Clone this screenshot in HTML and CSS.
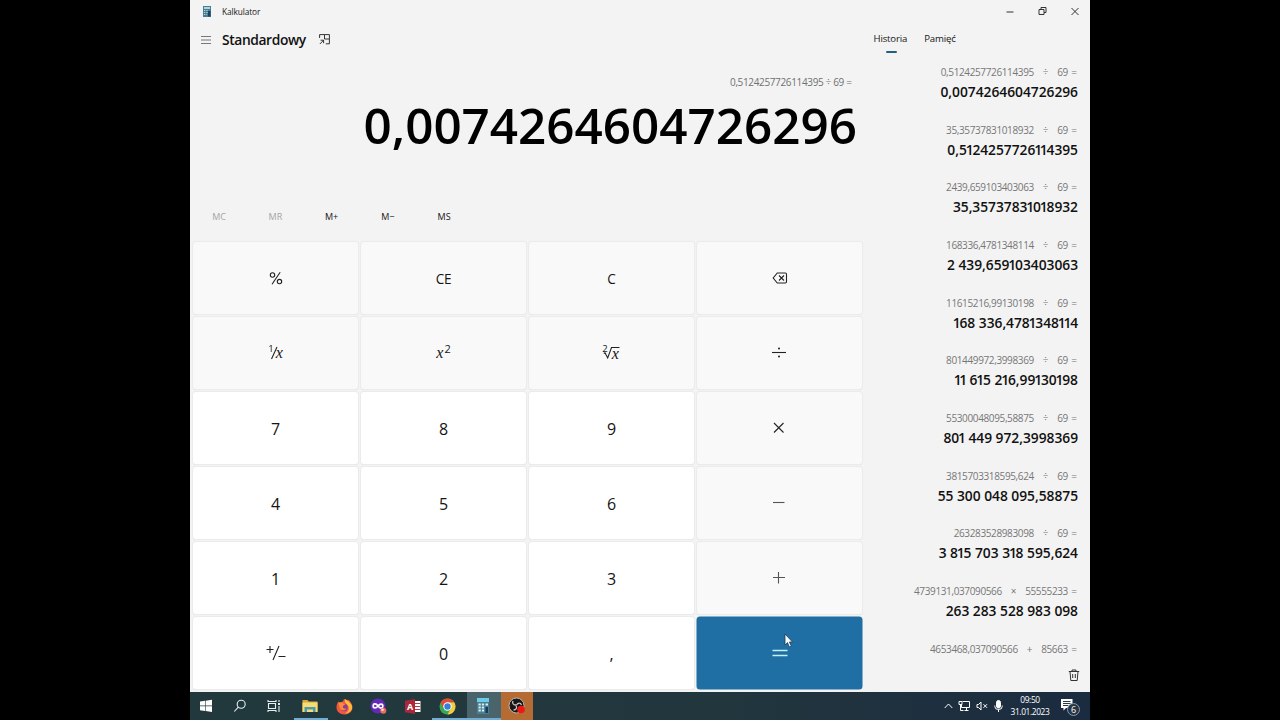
FILE: index.html
```html
<!DOCTYPE html>
<html lang="pl">
<head>
<meta charset="utf-8">
<title>Kalkulator</title>
<link rel="stylesheet" href="styles.css">
</head>
<body>
<div class="screen">
  <div class="window">
    <header class="titlebar">
      <svg class="app-icon" width="8" height="11" viewBox="0 0 8 11"><rect width="8" height="11" fill="#4b7c91"/><rect x="1" y="1" width="6" height="2" fill="#a9d7de"/><path d="M1 4.5h4M1 6.5h4M1 8.5h3" stroke="#b9d5dd" stroke-dasharray="1 .7"/><rect x="5" y="5" width="2.5" height="5.5" fill="#1d4265"/></svg>
      <span class="app-name">Kalkulator</span>
      <div class="win-buttons">
        <svg width="10" height="10" viewBox="0 0 10 10"><path d="M1.5 6h7"/></svg>
        <svg width="10" height="10" viewBox="0 0 10 10"><path d="M1 3.500h5v5H1zM3 3.500v-2h5v5H6"/></svg>
        <svg width="10" height="10" viewBox="0 0 10 10"><path d="M1.5 2l7 7M8.500 2l-7 7"/></svg>
      </div>
    </header>
    <main class="body">
      <section class="calc">
        <div class="mode">
          <svg class="menu" width="12" height="10" viewBox="0 0 12 10"><path d="M1 1.500h10M1 5h10M1 8.500h10"/></svg>
          <h1>Standardowy</h1>
          <svg class="pin" width="11" height="11" viewBox="0 0 11 11"><path d="M.6 4V.6h9.800v9.200H6.800M5.500 1v4H10M.8 10l4-4M1.600 6.200h3v3"/></svg>
        </div>
        <div class="expression">0,5124257726114395 ÷ 69 =</div>
        <div class="result">0,0074264604726296</div>
        <div class="memory"><span class="off">MC</span><span class="off">MR</span><span>M+</span><span>M−</span><span>MS</span></div>
        <div class="keys">
          <div class="key"><svg width="14" height="14" viewBox="0 0 14 14"><circle cx="3.500" cy="4" r="2.200"/><circle cx="10.500" cy="10.600" r="2.200"/><path d="M11.200 1.300L3 13.300"/></svg></div>
          <div class="key fn">CE</div>
          <div class="key fn">C</div>
          <div class="key"><svg width="16" height="12" viewBox="0 0 16 12"><path d="M5.300 1h8q1.200 0 1.200 1.200v7.600q0 1.200-1.200 1.200h-8L1.200 6zM7 3.500l5 5M12 3.500l-5 5"/></svg></div>
          <div class="key"><span class="math"><span class="up">1</span><svg class="slash" width="8" height="14" viewBox="0 0 8 14"><path d="M7 1L1.500 13"/></svg><i>x</i></span></div>
          <div class="key"><span class="math"><i>x</i><span class="up sq">2</span></span></div>
          <div class="key"><span class="math rooted"><span class="up root">2</span><svg class="radical" width="17" height="14" viewBox="0 0 17 14"><path d="M.8 7.500l1.200-.7 2.700 5.200L8.500 1.500H16.500"/></svg><i class="under">x</i></span></div>
          <div class="key op"><svg width="16" height="12" viewBox="0 0 16 12"><path d="M1 5.500h14"/><circle class="dot" cx="8" cy="1.500" r="1"/><circle class="dot" cx="8" cy="9.500" r="1"/></svg></div>
          <div class="key num">7</div><div class="key num">8</div><div class="key num">9</div>
          <div class="key op"><svg width="12" height="12" viewBox="0 0 12 12"><path d="M1 1l9.500 9.500M10.500 1L1 10.500"/></svg></div>
          <div class="key num">4</div><div class="key num">5</div><div class="key num">6</div>
          <div class="key op"><svg width="14" height="12" viewBox="0 0 14 12"><path class="soft" d="M1 5.500h11.500"/></svg></div>
          <div class="key num">1</div><div class="key num">2</div><div class="key num">3</div>
          <div class="key op"><svg width="14" height="13" viewBox="0 0 14 13"><path class="soft" d="M1 6.500h12M6.500 1v11.500"/></svg></div>
          <div class="key sign"><svg width="20" height="16" viewBox="0 0 20 16"><path d="M.5 4.500h7M4 1v7M13 1L7 15M12.500 11.500h7"/></svg></div>
          <div class="key num">0</div><div class="key num">,</div>
          <div class="key equals"><svg width="16" height="10" viewBox="0 0 16 10"><path d="M.5 2.500h15M.5 7.500h15"/></svg>
            <svg class="cursor" width="9" height="15" viewBox="0 0 9 15"><path d="M1 1v11l2.500-2.400L5.300 14l2-1-1.900-4H8.500z"/></svg></div>
        </div>
      </section>
      <aside class="side">
        <nav class="tabs"><span class="tab active">Historia</span><span class="tab">Pamięć</span></nav>
        <div class="history">
          <div class="entry"><div class="line"><span>0,5124257726114395</span><span>÷</span><span>69 =</span></div><b>0,0074264604726296</b></div>
          <div class="entry"><div class="line"><span>35,35737831018932</span><span>÷</span><span>69 =</span></div><b>0,5<i>1</i>24257726<i>1</i><i>1</i>4395</b></div>
          <div class="entry"><div class="line"><span>2439,659103403063</span><span>÷</span><span>69 =</span></div><b>35,3573783<i>1</i>0<i>1</i>8932</b></div>
          <div class="entry"><div class="line"><span>168336,4781348114</span><span>÷</span><span>69 =</span></div><b>2 439,659<i>1</i>03403063</b></div>
          <div class="entry"><div class="line"><span>11615216,99130198</span><span>÷</span><span>69 =</span></div><b><i>1</i>68 336,478<i>1</i>348<i>1</i><i>1</i>4</b></div>
          <div class="entry"><div class="line"><span>801449972,3998369</span><span>÷</span><span>69 =</span></div><b><i>1</i><i>1</i> 6<i>1</i>5 2<i>1</i>6,99<i>1</i>30<i>1</i>98</b></div>
          <div class="entry"><div class="line"><span>55300048095,58875</span><span>÷</span><span>69 =</span></div><b>80<i>1</i> 449 972,3998369</b></div>
          <div class="entry"><div class="line"><span>3815703318595,624</span><span>÷</span><span>69 =</span></div><b>55 300 048 095,58875</b></div>
          <div class="entry"><div class="line"><span>263283528983098</span><span>÷</span><span>69 =</span></div><b>3 8<i>1</i>5 703 3<i>1</i>8 595,624</b></div>
          <div class="entry"><div class="line"><span>4739131,037090566</span><span>×</span><span>55555233 =</span></div><b>263 283 528 983 098</b></div>
          <div class="entry last"><div class="line"><span>4653468,037090566</span><span>+</span><span>85663 =</span></div></div>
        </div>
        <svg class="trash" width="12" height="13" viewBox="0 0 12 13"><path d="M.8 2.500h10.400M4 2.500V1h4v1.500M2 2.500l.8 9h6.400l.8-9M4.700 5v4M7.300 5v4"/></svg>
      </aside>
    </main>
    <footer class="taskbar">
      <div class="task"><svg width="14" height="14" viewBox="0 0 14 14"><path fill="#fff" d="M1 2.500l5-.7v4.800H1zM6.600 1.700L13 .8v5.800H6.600zM1 7.200h5V12l-5-.7zM6.600 7.200H13V13l-6.400-.9z"/></svg></div>
      <div class="task"><svg class="outline" width="14" height="14" viewBox="0 0 14 14"><circle cx="8.200" cy="5.200" r="4"/><path d="M5.300 8.200L1.300 12.500"/></svg></div>
      <div class="task view"><svg class="outline" width="14" height="14" viewBox="0 0 14 14"><path d="M1 1v1.500h8V1M1.500 4.500h7v5h-7zM1 13v-1.500h8V13M12 1v2M12 7v6"/><path d="M12 4v2" stroke-width="2"/></svg></div>
      <div class="task open"><svg width="16" height="14" viewBox="0 0 16 14"><path fill="#dba935" d="M.5 1h5l1.300 1.500h8.700V13H.5z"/><path fill="#f6dc74" d="M.5 3.500h15V13H.5z"/><path fill="#4f9aab" d="M2.500 8h11v5h-2.500v-2.500H5V13H2.500z"/></svg></div>
      <div class="task"><svg width="17" height="17" viewBox="0 0 17 17"><path fill="#f6563d" d="M2.500 3.500l1.700 1.300C6 4 7 4 8 1c1 .3 2 1.500 2.700 2L12 1.500c2.500 2 4.500 4.500 4.500 8 0 4-3.500 7-8 7s-8-3-8-7c0-2.500.7-4.500 2-6z"/><path fill="#ffbd39" d="M9 1c4 3 7.500 5 7 9-.5 3.500-4 5.500-7 5.500 4-2 4.500-5 3-8C11 6 8 5 9 1z"/><circle cx="8" cy="9.500" r="3.700" fill="#8b3d9d"/><path fill="#fb8936" d="M2.500 5c2-1.200 4-.7 5 .5l2 .5-2.500 2c-.7 2 1 3 3.500 2.500-1.500 2.500-5 2.500-6.500 0C3.300 8.700 3 7 2.500 5z"/></svg></div>
      <div class="task"><svg width="17" height="17" viewBox="0 0 17 17"><circle cx="8" cy="8" r="7.500" fill="#6429b8"/><path d="M8 8C6 5 3.200 5.500 3.200 8s2.800 2.500 4.800 0 4.800-2.500 4.800 0S10 11 8 8z" fill="none" stroke="#fff" stroke-width="1.700"/><circle cx="13.300" cy="12.700" r="3" fill="#e86d67"/><circle cx="12.500" cy="11.800" r="1.300" fill="#ffe2c7"/></svg></div>
      <div class="task"><svg width="16" height="15" viewBox="0 0 16 15"><path fill="#fff" d="M9 2h6.500v11H9z"/><path d="M10 4.500h5M10 7.500h5M10 10.500h5" stroke="#b43c48"/><path fill="#a9283a" d="M0 1.800L10 0v15L0 13.200z"/><text x="1.900" y="11" class="letter">A</text></svg></div>
      <div class="task open"><svg width="17" height="17" viewBox="0 0 17 17"><circle cx="8.500" cy="8.500" r="8" fill="#39a953"/><path fill="#e44838" d="M8.500 8.500L5 10.500 1.600 4.500A8 8 0 0 1 15.400 4.500H8.500z"/><path fill="#f7cb3c" d="M8.500 4.500h6.900A8 8 0 0 1 8.500 16.500l3.500-6z"/><circle cx="8.500" cy="8.500" r="4.200" fill="#fff"/><circle cx="8.500" cy="8.500" r="3.200" fill="#387fd9"/></svg></div>
      <div class="task open current"><svg width="14" height="16" viewBox="0 0 14 16"><path fill="#497d90" d="M1 0h12v16H1z"/><path fill="#6fcce8" d="M1 0h12v4H1z"/><path d="M2.500 6.500h6M2.500 9.500h6M2.500 12.500h6" stroke="#d6f0f3" stroke-width="2" stroke-dasharray="2.300 1"/><path fill="#d6f0f3" d="M9.500 5.500H12v2H9.500z"/><path fill="#153b65" d="M9.500 9H12v6H9.500z"/></svg></div>
      <div class="task recorder"><svg width="18" height="18" viewBox="0 0 18 18"><circle cx="8.500" cy="8.500" r="7.500" fill="#17171a" stroke="#c3b4aa"/><path d="M8 8c-3 0-4-2-3-4M8.500 8c1.500-2.500 4-2.500 5 0M8 8.500c1.500 2.500 0 4.500-2.500 4.500" fill="none" stroke="#c9c5c2" stroke-width="1.300"/><circle cx="13" cy="12.500" r="3.800" fill="#ed1717"/></svg></div>
      <div class="tray">
        <svg width="9" height="8" viewBox="0 0 9 8"><path d="M.7 6l3.800-4 3.800 4"/></svg>
        <svg width="13" height="12" viewBox="0 0 13 12"><path d="M4.500 1.500h7v6h-8V5M6.500 10.500h4M8.500 8v2M1 1.500h3v3H1zM2.500 5v5.500h3"/></svg>
        <svg width="12" height="10" viewBox="0 0 12 10"><path d="M1 3.500h1.500l2.500-2.500v8L2.500 6.500H1zM7.500 3.200l3.500 3.600M11 3.200L7.500 6.800"/></svg>
        <svg class="mic" width="9" height="13" viewBox="0 0 9 13"><rect x="2.500" y=".5" width="4" height="7.500" rx="2" fill="#fff"/><path d="M.8 5.500v1q0 3 3.700 3t3.700-3v-1M4.500 9.500V12"/></svg>
        <div class="clock"><span>09:50</span><span>31.01.2023</span></div>
        <div class="notice"><svg width="12" height="12" viewBox="0 0 12 12"><path fill="#fff" stroke="none" d="M0 0h11.500v9H5l-2.500 2.500V9H0z"/><path class="rule" d="M2 2.500h7.500M2 4.500h7.500M2 6.500h5"/></svg><span class="badge">6</span></div>
      </div>
    </footer>
  </div>
</div>
</body>
</html>
```
FILE: styles.css
```css
* { box-sizing: border-box; }
body { margin: 0; background: #000; font-family: "Open Sans", "Noto Sans", sans-serif; color: #151515; }
svg { display: block; fill: none; stroke: none; flex: none; }
.screen { width: 1280px; height: 720px; overflow: hidden; display: flex; justify-content: center; }
.window { width: 900px; height: 720px; display: flex; flex-direction: column; background: #f3f3f3; }
.titlebar { height: 24px; display: flex; align-items: center; padding: 0 10px 2px 13px; flex: none; }
.app-name { font-size: 8.300px; letter-spacing: -0.1px; margin-left: 11px; }
.win-buttons { margin-left: auto; display: flex; gap: 22.500px; }
.win-buttons svg { stroke: #333; }
.body { flex: 1; display: flex; min-height: 0; }
.calc { width: 675px; padding: 0 3px; display: flex; flex-direction: column; }
.mode { height: 32px; display: flex; align-items: center; padding: 0 0 1px 7px; flex: none; }
.menu { stroke: #777; }
.mode h1 { margin: 0 0 1px 10px; width: 84px; font-size: 13.800px; font-weight: 600; letter-spacing: -0.38px; white-space: nowrap; color: #111; }
.pin { margin-left: 13px; stroke: #333; }
.expression { height: 20px; margin-top: 16px; line-height: 20px; padding-right: 10.500px; text-align: right; font-size: 10px; letter-spacing: -0.36px; color: #707070; }
.result { height: 68px; line-height: 66px; text-align: right; font-size: 49.400px; font-weight: 600; color: #000; padding-right: 5px; }
.memory { display: flex; height: 20px; margin-top: 47px; }
.memory span { width: 56.250px; text-align: center; line-height: 20px; font-size: 9px; font-weight: 500; position: relative; left: -2px; }
.memory .off { color: #a5a5a5; font-weight: 400; }
.keys { margin-top: 15px; height: 447px; width: 669px; display: grid; grid-template-columns: repeat(4, 1fr); grid-template-rows: repeat(6, 1fr); column-gap: 3px; row-gap: 2.500px; }
.key { background: #f9f9f9; border-radius: 3px; box-shadow: 0 0 0 1px #ebebeb, 0 1px 0 #d0d0d0; display: flex; align-items: center; justify-content: center; font-size: 16px; }
.key svg { stroke: #222; stroke-width: 1.1; }
.key .dot { fill: #222; stroke: none; }
.key .soft { stroke: #555; }
.op { padding-right: 1px; }
.fn { font-size: 13.600px; padding-top: 1px; letter-spacing: -0.2px; }
.num { background: #fff; padding-top: 2px; }
.sign { background: #fff; }
.equals { background: #1f6fa5; box-shadow: 0 0 0 .5px #1f6fa5; position: relative; }
.equals svg { stroke: #c2f1f5; stroke-width: 1.3; }
.equals .cursor { position: absolute; left: 86.500px; top: 16.500px; fill: #fff; stroke: #1b3d59; stroke-width: .8; }
.math { display: flex; align-items: center; position: relative; height: 18px; line-height: 18px; }
.math i { font-family: "Liberation Serif", serif; font-size: 16px; }
.up { font-size: 9.500px; position: relative; top: -4px; }
.sq { font-size: 11px; margin-left: 1px; }
.slash { margin: 0 -2px 0 -4px; }
.rooted { left: -1px; }
.root { margin-right: -5px; }
.radical { margin-right: -8px; }
.under { position: relative; top: 1px; }
.side { width: 225px; display: flex; flex-direction: column; padding-right: 12px; }
.tabs { display: flex; gap: 17px; padding: 6px 0 0 8.500px; height: 39px; flex: none; }
.tab { font-size: 9.600px; line-height: 17px; letter-spacing: -0.16px; height: 23px; position: relative; }
.active::after { content: ""; position: absolute; width: 11px; height: 2px; border-radius: 1px; background: #235f81; left: 12px; bottom: 0; }
.history { display: flex; flex-direction: column; height: 597px; flex: none; }
.entry { height: 57.670px; flex: none; text-align: right; }
.last { height: 20px; }
.line { display: flex; justify-content: flex-end; gap: 9px; padding-right: 1.500px; height: 20px; line-height: 19px; font-size: 10px; letter-spacing: -0.37px; word-spacing: 1px; color: #777; white-space: nowrap; }
.entry b { display: block; height: 20px; line-height: 18px; font-size: 13.800px; font-weight: 600; letter-spacing: -0.02px; color: #111; white-space: nowrap; }
.entry i { font-style: normal; margin: 0 -1.150px; }
.trash { align-self: flex-end; margin: 8.500px -2px 0 0; stroke: #333; }
.taskbar { height: 28px; flex: none; display: flex; background: linear-gradient(90deg, #21393d, #22373d 55%, #1b2b40); color: #fff; }
.task { width: 34.600px; display: flex; align-items: center; justify-content: center; padding-right: 3px; flex: none; }
.view { padding-right: 5px; }
.outline { stroke: #e8eeee; stroke-width: 1.1; }
.open { box-shadow: inset 0 -2px #72add5; }
.task.recorder { padding-right: 0; }
.current { background: #49646a; }
.recorder { background: #b46c34; width: 32px; }
.letter { font: 700 9px "Open Sans", sans-serif; fill: #fff; }
.tray { margin-left: auto; display: flex; align-items: center; padding-right: 10px; }
.tray svg { stroke: #fff; stroke-width: 1; margin-right: 5px; }
.tray .mic { margin: 0 6px 0 1px; }
.clock { width: 42px; display: flex; flex-direction: column; text-align: center; font-size: 8.400px; line-height: 12.500px; letter-spacing: -0.38px; white-space: nowrap; align-items: center; }
.notice { margin-left: 10px; position: relative; width: 19px; height: 15px; }
.notice .rule { stroke: #283b4b; }
.badge { position: absolute; left: 6px; top: 4px; width: 13px; height: 13px; border: 1px solid #8a98a4; border-radius: 50%; background: #263645; font-size: 9px; line-height: 11px; text-align: center; }
```
